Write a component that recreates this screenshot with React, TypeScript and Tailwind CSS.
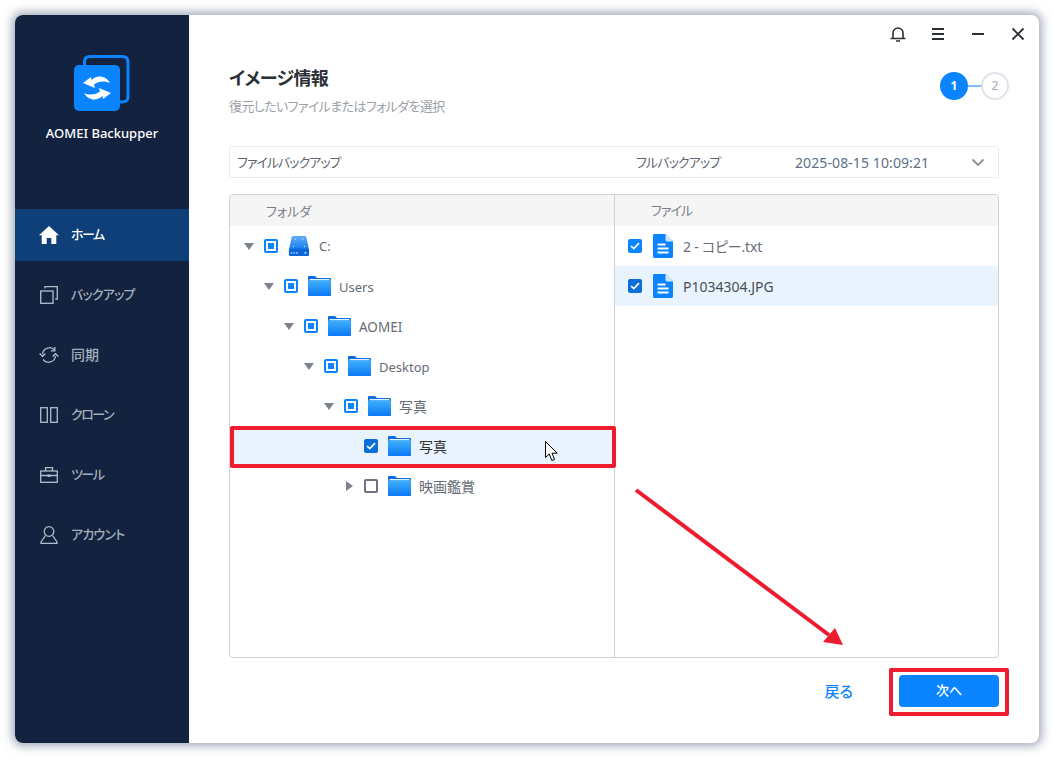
import React from "react";

const Folder = () => (
  <svg width="23" height="20" viewBox="0 0 23 20" className="block shrink-0">
    <defs>
      <linearGradient id="fg" x1="0" y1="0" x2="0" y2="1">
        <stop offset="0" stopColor="#3fb0fb" />
        <stop offset="1" stopColor="#0a78f5" />
      </linearGradient>
    </defs>
    <path d="M0 1C0 .4.4 0 1 0H7l2 2h13c.6 0 1 .4 1 1V8H0z" fill="#0a6fe0" />
    <rect x="1.500" y="3" width="20" height="1.500" fill="#dcefff" />
    <path d="M0 4.500h23V19c0 .6-.4 1-1 1H1c-.6 0-1-.4-1-1z" fill="url(#fg)" />
  </svg>
);

const Drive = () => (
  <svg width="22" height="22" viewBox="0 0 24 22" className="block shrink-0">
    <defs>
      <linearGradient id="dg" x1="0" y1="0" x2="0" y2="1">
        <stop offset="0" stopColor="#64b0f8" />
        <stop offset="1" stopColor="#1479ee" />
      </linearGradient>
    </defs>
    <path d="M4 1.500C4.200.6 4.800 0 5.700 0h12.600c.9 0 1.500.6 1.700 1.500L23 15H1z" fill="url(#dg)" />
    <rect x="1" y="14" width="22" height="8" rx="1.500" fill="#0c66d8" />
    <rect x="3" y="17.500" width="1.500" height="2" fill="#9dcbfb" />
    <rect x="6" y="17.500" width="1.500" height="2" fill="#9dcbfb" />
    <rect x="9" y="17.500" width="1.500" height="2" fill="#9dcbfb" />
    <circle cx="19" cy="18.500" r="1.200" fill="#9dcbfb" />
    <circle cx="8" cy="3.500" r=".7" fill="#d6eaff" />
    <circle cx="16" cy="3.500" r=".7" fill="#d6eaff" />
    <circle cx="6" cy="11.500" r=".7" fill="#d6eaff" />
    <circle cx="18" cy="11.500" r=".7" fill="#d6eaff" />
  </svg>
);

const FileIcon = () => (
  <svg width="20" height="24" viewBox="0 0 20 24" className="block shrink-0">
    <path d="M1.500 0H12.500L20 7.500V22.500C20 23.300 19.300 24 18.500 24H1.500C.7 24 0 23.300 0 22.500V1.500C0 .7.7 0 1.500 0z" fill="#0a84ff" />
    <path d="M12.500 0L20 7.500H14c-.8 0-1.500-.7-1.500-1.500z" fill="#cfe6fd" />
    <rect x="4.500" y="9.500" width="8" height="2" fill="#fff" />
    <rect x="4.500" y="13.500" width="11" height="2" fill="#fff" />
    <rect x="4.500" y="17.500" width="11" height="2" fill="#fff" />
  </svg>
);

const CheckMark = () => (
  <svg width="10" height="8" viewBox="0 0 10 8">
    <path d="M1 4l2.800 2.600L9 1.200" fill="none" stroke="#fff" strokeWidth="1.700" />
  </svg>
);

const Check = ({ dark }: { dark?: boolean }) => (
  <span className={`flex h-[14px] w-[14px] shrink-0 items-center justify-center rounded-[2px] ${dark ? "bg-[#0a6fd8]" : "bg-[#0a84ff]"}`}>
    <CheckMark />
  </span>
);

const Partial = () => (
  <span className="flex h-[14px] w-[14px] shrink-0 items-center justify-center rounded-[2px] border-2 border-[#0a84ff]">
    <span className="h-[6px] w-[6px] bg-[#0a84ff]" />
  </span>
);

const Empty = () => <span className="block h-[14px] w-[14px] shrink-0 rounded-[2px] border-2 border-[#6b7280]" />;

const Down = () => <span className="h-0 w-0 border-x-[5.500px] border-t-[7px] border-x-transparent border-t-[#7c838c]" />;
const Right = () => <span className="h-0 w-0 border-y-[5.500px] border-l-[7px] border-y-transparent border-l-[#7c838c]" />;

const TreeRow = ({
  pad,
  arrow,
  box,
  icon,
  label,
  size,
  selected,
}: {
  pad: string;
  arrow?: React.ReactNode;
  box: React.ReactNode;
  icon: React.ReactNode;
  label: string;
  size: string;
  selected?: boolean;
}) => (
  <div className={`flex h-10 items-center ${pad} ${selected ? "bg-[#e8f3fd] text-[#333]" : "text-[#666c75]"}`}>
    <span className="flex w-[14px] items-center justify-center">{arrow}</span>
    <span className="ml-[8px] block">{box}</span>
    <span className="ml-[10px] flex w-[23px] justify-start">{icon}</span>
    <span className={`ml-[8px] ${size}`}>{label}</span>
  </div>
);

const icons: Record<string, React.ReactNode> = {
  home: (
    <svg width="20" height="18" viewBox="0 0 20 18">
      <path d="M10 0L0 9.200h2.700V18h5v-6h4.600v6h5V9.200H20z" fill="#fff" />
    </svg>
  ),
  backup: (
    <svg width="18" height="18" viewBox="0 0 18 18" fill="none" stroke="#b3bcc9" strokeWidth="1.300">
      <rect x=".7" y="5" width="12.300" height="12.300" />
      <path d="M5 2.500V.7h12.300V13h-2" />
    </svg>
  ),
  sync: (
    <svg width="20" height="18" viewBox="0 0 20 18" fill="none" stroke="#b3bcc9" strokeWidth="1.300">
      <path d="M3.500 8a7 7 0 0 1 12.500-3.500" />
      <path d="M16.500 10a7 7 0 0 1-12.500 3.500" />
      <path d="M15.800.9v4h-4" />
      <path d="M.6 8.500l3 2.800 2.800-2.800" transform="translate(0 -1)" />
      <path d="M19.400 9.500l-3-2.800-2.800 2.800" transform="translate(0 1)" />
    </svg>
  ),
  clone: (
    <svg width="18" height="16" viewBox="0 0 18 16" fill="none" stroke="#b3bcc9" strokeWidth="1.300">
      <rect x=".7" y=".7" width="6.600" height="14.600" />
      <rect x="10.700" y=".7" width="6.600" height="14.600" />
    </svg>
  ),
  tool: (
    <svg width="18" height="16" viewBox="0 0 18 16" fill="none" stroke="#b3bcc9" strokeWidth="1.300">
      <rect x=".7" y="4" width="16.600" height="11.300" />
      <path d="M5.500 4V.7h7V4M.7 8.500h16.600" />
      <rect x="7.500" y="7.500" width="3" height="2.500" fill="#b3bcc9" stroke="none" />
    </svg>
  ),
  user: (
    <svg width="18" height="18" viewBox="0 0 18 18" fill="none" stroke="#b3bcc9" strokeWidth="1.300">
      <ellipse cx="9" cy="5.500" rx="4.800" ry="4.800" />
      <path d="M5.500 9.500L1 16v1.300h16V16l-4.500-6.500" />
    </svg>
  ),
};

const NavItem = ({ icon, label, active, text }: { icon: string; label: string; active?: boolean; text: string }) => (
  <div className={`flex items-center pl-[24px] ${active ? "h-[52px] bg-[#0f3f78] text-white" : "h-[60px] text-[#a3adbb]"}`}>
    <span className="flex w-[20px] justify-center">{icons[icon]}</span>
    <span className={`ml-[12px] font-medium ${text}`}>{label}</span>
  </div>
);

export default function App() {
  return (
    <div className="relative h-[758px] w-[1054px] overflow-hidden bg-white p-[15px] font-['Noto_Sans','Noto_Sans_CJK_JP',sans-serif] [font-feature-settings:'palt']">
      <div className="flex h-[728px] w-[1024px] overflow-hidden rounded-[8px] bg-white shadow-[0_0_10px_3px_rgba(70,85,115,0.5)]">
        <aside className="flex w-[174px] shrink-0 flex-col bg-[#13233f]">
          <div className="flex h-[194px] flex-col items-center">
            <svg width="58" height="58" viewBox="0 0 58 58" className="mt-[40px] ml-[2px]">
              <path d="M10.500 12V7C10.500 3.500 12 1.500 16 1.500H48C52 1.500 54 3.500 54 7V42C54 45.500 52 47 48 47H40" fill="none" stroke="#0a84ff" strokeWidth="3" />
              <rect x="0" y="10" width="46" height="46" rx="5" fill="#0a84ff" />
              <path d="M9 28L17 22L17.500 25C23 19.500 32 20.500 36 28C31 25.500 24 26 20 29.500L21 33z" fill="#fff" />
              <path d="M9 28L17 22L17.500 25C23 19.500 32 20.500 36 28C31 25.500 24 26 20 29.500L21 33z" fill="#fff" transform="rotate(180 23 33)" />
            </svg>
            <div className="mt-[11px] text-[13px] font-medium text-white">AOMEI Backupper</div>
          </div>
          <NavItem icon="home" label="ホーム" active text="text-[13px] tracking-[-1.500px]" />
          <div className="h-[4px]" />
          <NavItem icon="backup" label="バックアップ" text="text-[13px] tracking-[-0.800px]" />
          <NavItem icon="sync" label="同期" text="pb-[2px] text-[14px]" />
          <NavItem icon="clone" label="クローン" text="text-[13px] tracking-[-1.500px]" />
          <NavItem icon="tool" label="ツール" text="text-[13px] tracking-[-1.500px]" />
          <NavItem icon="user" label="アカウント" text="text-[13px] tracking-[-0.800px]" />
        </aside>
        <main className="flex min-w-0 flex-1 flex-col">
          <div className="flex h-[40px] items-center justify-end gap-[24px] pr-[13px] pb-[3px]">
            <svg width="16" height="16" viewBox="0 0 16 16" fill="none" stroke="#2b2f36" strokeWidth="1.600">
              <path d="M.5 12.500h15M3 12.500V7a5 5 0 0 1 10 0v5.500" />
              <path d="M6 15h4" />
            </svg>
            <svg width="16" height="14" viewBox="0 0 16 14" fill="none" stroke="#2b2f36" strokeWidth="1.800">
              <path d="M2 2h12M2 7h12M2 12h12" />
            </svg>
            <svg width="16" height="14" viewBox="0 0 16 14" fill="none" stroke="#2b2f36" strokeWidth="1.800">
              <path d="M2 7h12" />
            </svg>
            <svg width="16" height="14" viewBox="0 0 16 14" fill="none" stroke="#2b2f36" strokeWidth="1.900">
              <path d="M2.500 1.500l11 11M13.500 1.500l-11 11" />
            </svg>
          </div>
          <div className="flex h-[91px] items-start justify-between pl-[40px] pr-[30px]">
            <div>
              <h1 className="mt-[10px] text-[18px] leading-[26px] font-bold tracking-[-0.600px] text-[#2b2f36]">イメージ情報</h1>
              <p className="mt-[6px] text-[13px] leading-[18px] tracking-[-0.600px] text-[#9aa0a8]">復元したいファイルまたはフォルダを選択</p>
            </div>
            <div className="mt-[17px] flex items-center">
              <span className="flex h-[28px] w-[28px] items-center justify-center rounded-full bg-[#0a84ff] text-[12px] font-bold text-white">1</span>
              <span className="h-[2px] w-[13px] bg-[#7cbcff]" />
              <span className="flex h-[28px] w-[28px] items-center justify-center rounded-full border-2 border-[#dfe3ea] text-[12px] text-[#a3a9b3]">2</span>
            </div>
          </div>
          <div className="mx-[40px] flex h-[32px] items-center rounded-[2px] border border-[#ececec] pl-[7px] text-[14px] text-[#5d636c]">
            <span className="w-[399px] pt-[2px] text-[13px] tracking-[-1px]">ファイルバックアップ</span>
            <span className="w-[159px] pt-[2px] text-[13px] tracking-[-0.900px]">フルバックアップ</span>
            <span className="w-[176px] tracking-[0.100px] text-[#5d6f85]">2025-08-15 10:09:21</span>
            <svg width="14" height="9" viewBox="0 0 14 9" fill="none" stroke="#8a919b" strokeWidth="1.800">
              <path d="M1.500 1.500L7 7l5.500-5.500" />
            </svg>
          </div>
          <div className="mx-[40px] mt-[16px] flex h-[464px] overflow-hidden rounded-[4px] border border-[#d2d2d2]">
            <div className="w-[385px] shrink-0 border-r border-[#d2d2d2]">
              <div className="flex h-[31px] items-center bg-[#f5f5f5] pl-[36px] pt-[2px] text-[13px] text-[#7a7f87]">フォルダ</div>
              <TreeRow pad="pl-[12px]" arrow={<Down />} box={<Partial />} icon={<Drive />} label="C:" size="pt-[1px] text-[13px]" />
              <TreeRow pad="pl-[32px]" arrow={<Down />} box={<Partial />} icon={<Folder />} label="Users" size="pt-[3px] text-[13px]" />
              <TreeRow pad="pl-[52px]" arrow={<Down />} box={<Partial />} icon={<Folder />} label="AOMEI" size="pt-[2px] text-[13.500px]" />
              <TreeRow pad="pl-[72px]" arrow={<Down />} box={<Partial />} icon={<Folder />} label="Desktop" size="pt-[3px] text-[13px]" />
              <TreeRow pad="pl-[92px]" arrow={<Down />} box={<Partial />} icon={<Folder />} label="写真" size="text-[14px]" />
              <TreeRow pad="pl-[112px]" box={<Check dark />} icon={<Folder />} label="写真" size="text-[14px]" selected />
              <TreeRow pad="pl-[112px]" arrow={<Right />} box={<Empty />} icon={<Folder />} label="映画鑑賞" size="text-[14px]" />
            </div>
            <div className="min-w-0 flex-1">
              <div className="flex h-[31px] items-center bg-[#f5f5f5] pl-[36px] pt-[1px] text-[13px] tracking-[-1px] text-[#7a7f87]">ファイル</div>
              <div className="flex h-10 items-center pl-[13px] text-[14px] text-[#666c75]">
                <Check />
                <span className="ml-[11px]"><FileIcon /></span>
                <span className="ml-[10px] tracking-[-0.200px]">2 - コピー.txt</span>
              </div>
              <div className="flex h-10 items-center bg-[#e8f3fd] pl-[13px] text-[14px] text-[#4a4f57]">
                <Check dark />
                <span className="ml-[11px]"><FileIcon /></span>
                <span className="ml-[10px]">P1034304.JPG</span>
              </div>
            </div>
          </div>
          <div className="flex flex-1 items-center justify-end pr-[40px] pb-[19px]">
            <span className="mr-[46px] text-[15px] font-medium text-[#0a84ff]">戻る</span>
            <button className="h-[32px] w-[100px] rounded-[4px] bg-[#0a84ff] text-[13px] font-medium text-white">次へ</button>
          </div>
        </main>
      </div>

      <div className="absolute left-[230px] top-[426px] h-[42px] w-[386px] rounded-[2px] border-4 border-[#ed1c2e]" />
      <div className="absolute left-[889px] top-[668px] h-[48px] w-[120px] rounded-[2px] border-4 border-[#ed1c2e]" />
      <svg width="220" height="170" viewBox="0 0 220 170" className="absolute left-[630px] top-[485px]">
        <path d="M6 5L199 150" stroke="#ed1c2e" strokeWidth="4" />
        <path d="M213 160L193 157L205 143z" fill="#ed1c2e" />
      </svg>
      <svg width="14" height="22" viewBox="0 0 14 22" className="absolute left-[545px] top-[441px]">
        <path d="M.5.500V16.500L4.300 13l2.500 6.500 2.700-1.100L7 12.200h5.200z" fill="#fff" stroke="#000" strokeWidth="1" />
      </svg>
    </div>
  );
}
